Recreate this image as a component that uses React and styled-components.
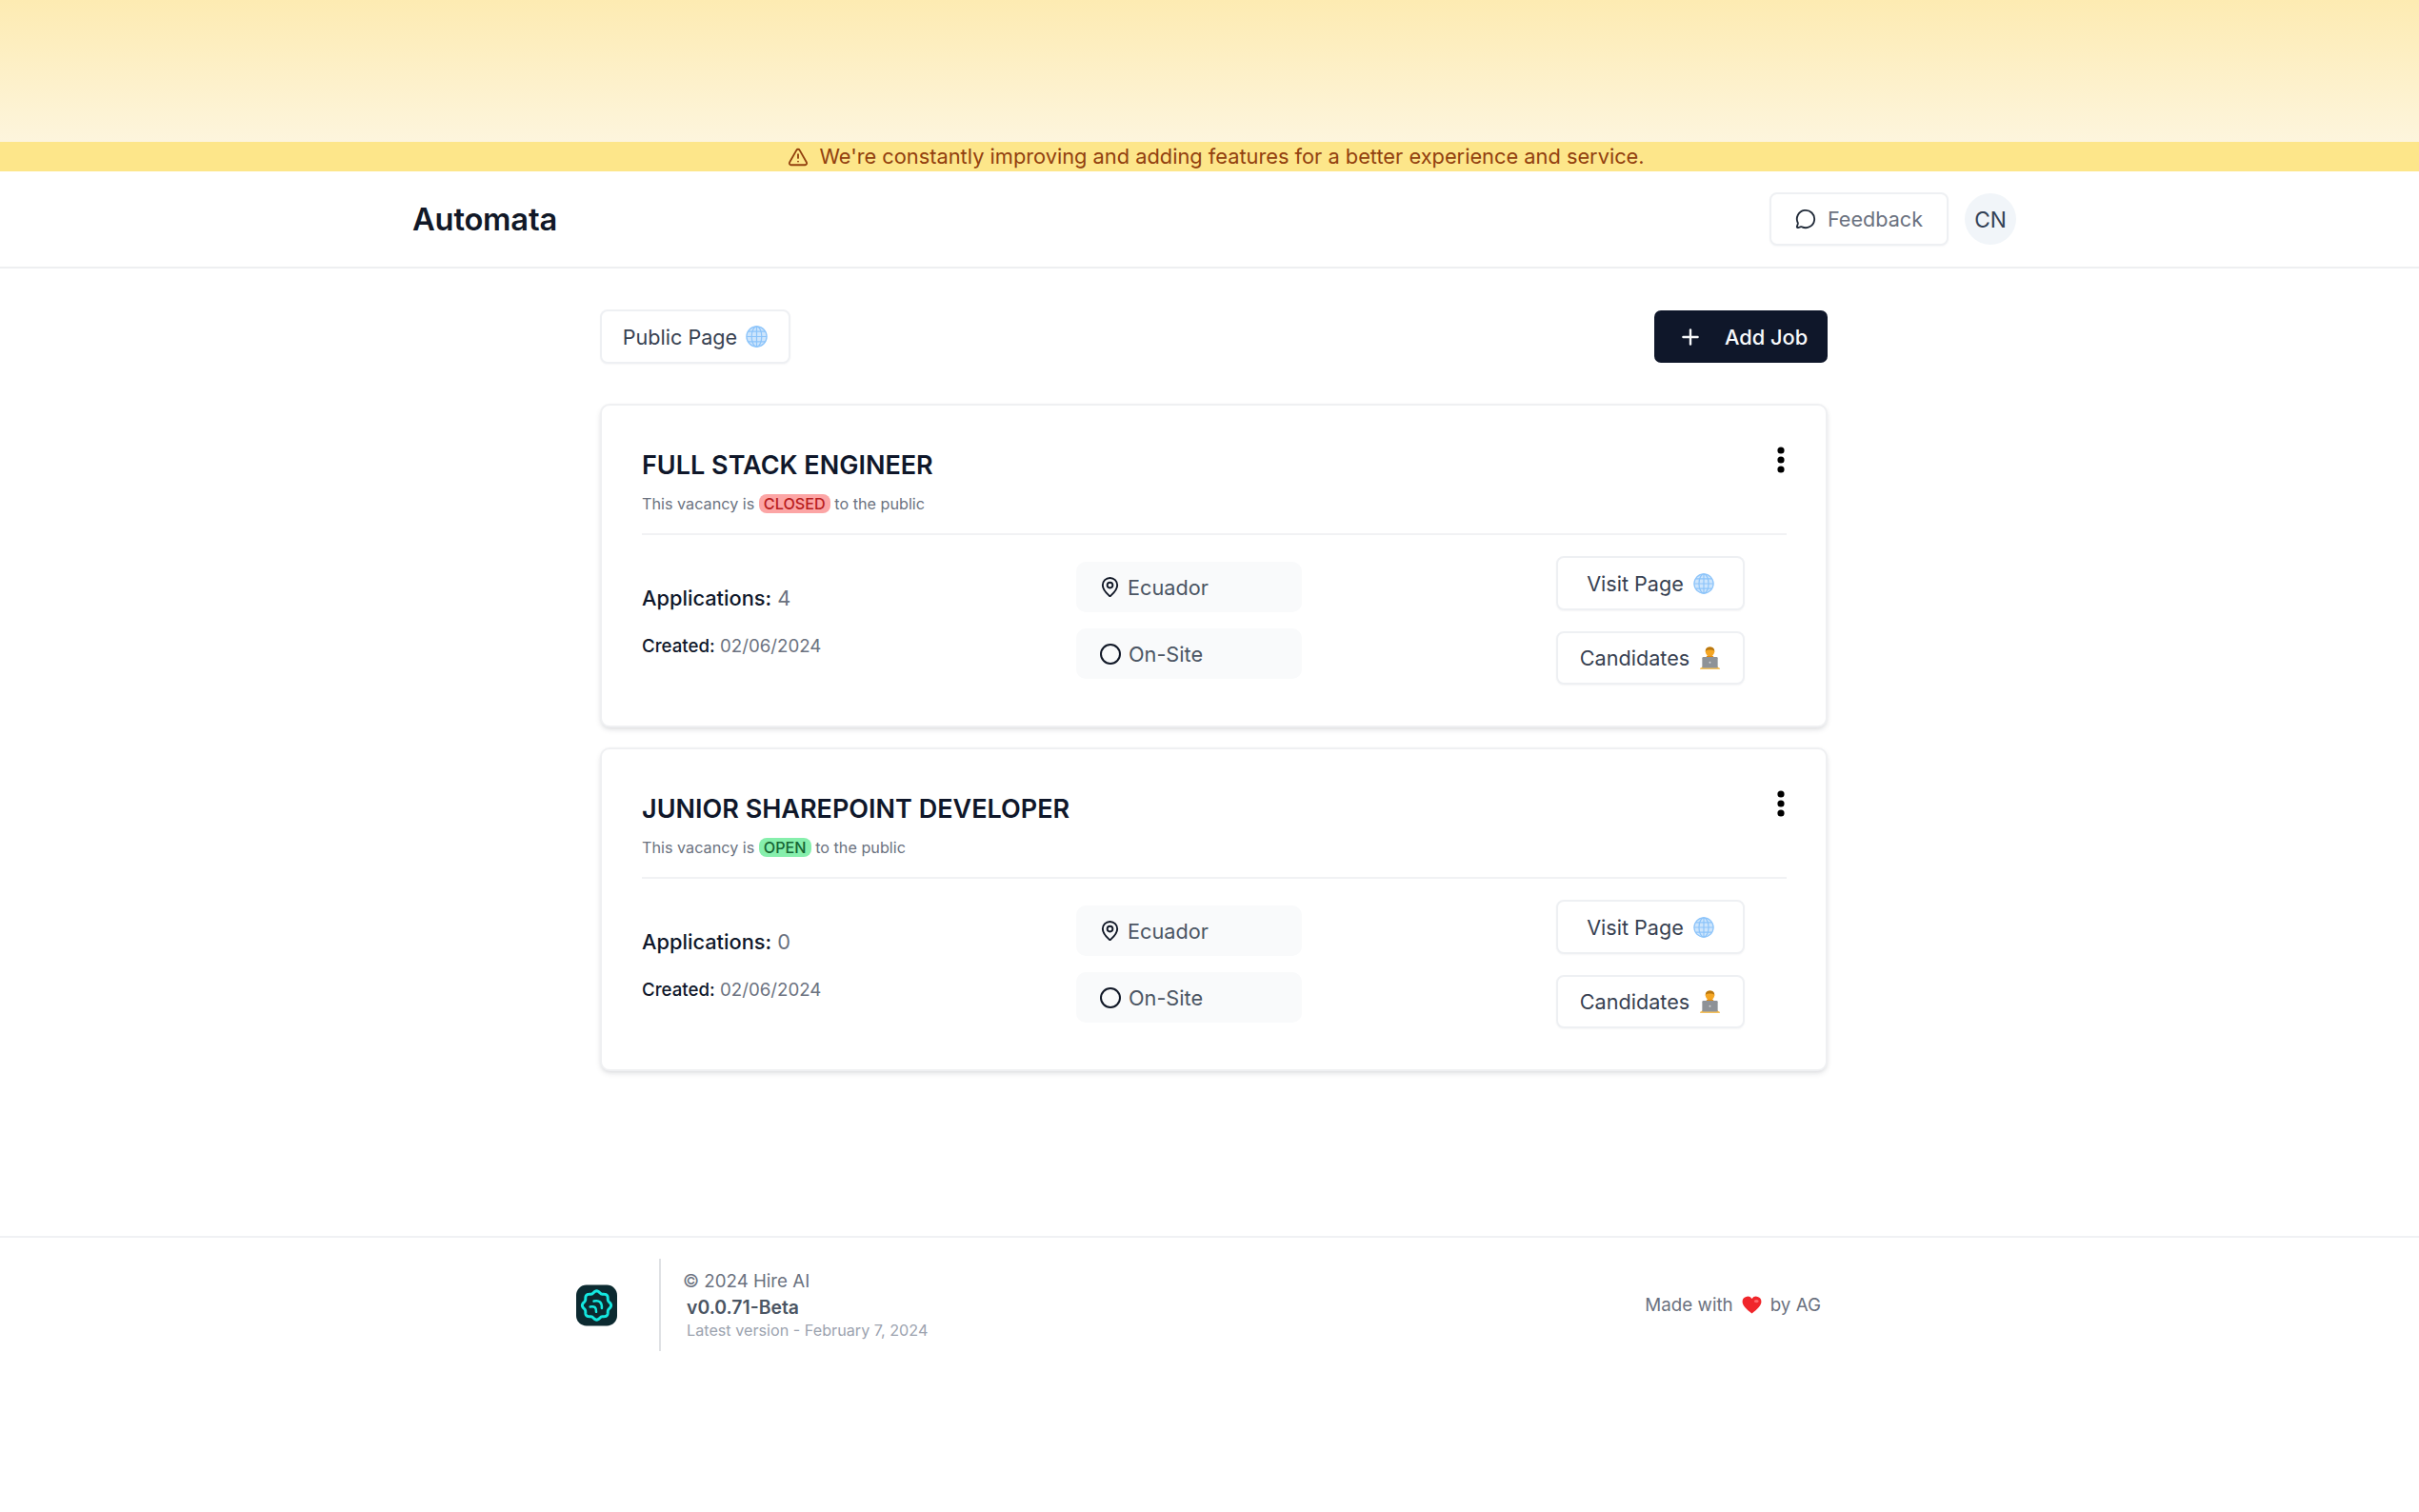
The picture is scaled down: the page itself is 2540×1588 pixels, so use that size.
import React from 'react';
import styled, { createGlobalStyle } from 'styled-components';
import { TriangleAlert, MessageCircle, Plus, MapPin, Circle } from 'lucide-react';

const Global = createGlobalStyle`
  html, body { margin: 0; padding: 0; background: #fff; }
  body { font-family: Inter, "Noto Sans", sans-serif; color: #0f172a; }
  * { box-sizing: border-box; }
`;

const Page = styled.div`
  width: 2540px;
  min-height: 1588px;
  display: flex;
  flex-direction: column;
`;

const TopGlow = styled.div`
  height: 149px;
  background: linear-gradient(180deg, #fdebb2 0%, #fdf5dd 100%);
`;

const Banner = styled.div`
  height: 31px;
  background: #fde68a;
  color: #92400e;
  display: flex;
  align-items: center;
  justify-content: center;
  gap: 11px;
  padding-left: 14px;
  font-size: 21.8px;
  line-height: 31px;
`;

const Header = styled.header`
  height: 102px;
  border-bottom: 2px solid #eeeff1;
  margin-bottom: -1px;
  display: flex;
  align-items: center;
  justify-content: space-between;
  padding: 0 423px 0 433px;
`;

const Brand = styled.div`
  font-size: 32.7px;
  font-weight: 600;
  letter-spacing: -0.2px;
  color: #111827;
`;

const HeaderActions = styled.div`
  display: flex;
  align-items: center;
  gap: 17px;
`;

const OutlineButton = styled.button`
  font-family: inherit;
  font-size: 21.6px;
  font-weight: 400;
  color: ${p => p.$muted ? '#6b7280' : '#374151'};
  background: #fff;
  border: 2px solid #eef0f3;
  border-radius: 8px;
  box-shadow: 0 1px 2px rgba(15, 23, 42, 0.04);
  display: flex;
  align-items: center;
  justify-content: center;
  gap: ${p => p.$gap || 10}px;
  width: ${p => p.$w}px;
  height: ${p => p.$h}px;
  padding: 0;
`;

const Avatar = styled.div`
  width: 54px;
  height: 54px;
  border-radius: 50%;
  background: #f1f5f9;
  color: #334155;
  font-size: 22.7px;
  display: flex;
  align-items: center;
  justify-content: center;
`;

const Main = styled.main`
  padding: 44px 621px 173px 630px;
  display: flex;
  flex-direction: column;
`;

const Toolbar = styled.div`
  display: flex;
  justify-content: space-between;
  align-items: center;
  height: 57px;
  margin-bottom: 42px;
`;

const PrimaryButton = styled.button`
  font-family: inherit;
  font-size: 21.8px;
  font-weight: 500;
  color: #f8fafc;
  background: #0f172a;
  border: 0;
  border-radius: 7px;
  width: 182px;
  height: 55px;
  display: flex;
  align-items: center;
  gap: 23px;
  padding: 0 0 0 25px;
`;

const CardList = styled.div`
  display: flex;
  flex-direction: column;
  gap: 21px;
`;

const Card = styled.article`
  position: relative;
  height: 340px;
  background: #fff;
  border: 2px solid #eff0f2;
  border-radius: 10px;
  box-shadow: 0 3px 6px -1px rgba(15, 23, 42, 0.12), 0 2px 4px -2px rgba(15, 23, 42, 0.08);
  padding: 0 41px 0 42px;
`;

const CardHead = styled.div`
  padding: 45px 0 19px;
  border-bottom: 2px solid #f1f2f4;
`;

const Title = styled.h2`
  margin: 0;
  font-size: 27px;
  line-height: 36px;
  font-weight: 600;
  color: #0f172a;
`;

const Sub = styled.div`
  margin-top: 10px;
  font-size: 16.2px;
  line-height: 24px;
  color: #6b7280;
`;

const Badge = styled.span`
  display: inline-block;
  line-height: 20px;
  padding: 0 5px;
  border-radius: 8px;
  font-weight: 500;
  background: ${p => p.$open ? '#86efac' : '#fca5a5'};
  color: ${p => p.$open ? '#166534' : '#b91c1c'};
`;

const Kebab = styled.svg`
  position: absolute;
  top: 43px;
  right: 42px;
  width: 10px;
  height: 28px;
`;

const CardBody = styled.div`
  display: flex;
`;

const StatsCol = styled.div`
  width: 456px;
  padding-top: 50px;
`;

const Stat = styled.div`
  font-size: ${p => p.$small ? 18.7 : 21.8}px;
  line-height: ${p => p.$small ? 28 : 32}px;
  margin-bottom: 21px;
  color: #6b7280;
  strong { font-weight: 500; color: #0f172a; }
`;

const TagsCol = styled.div`
  width: 237px;
  padding-top: 28px;
  display: flex;
  flex-direction: column;
  gap: 17px;
`;

const Tag = styled.div`
  height: 53px;
  border-radius: 10px;
  background: #f9fafb;
  display: flex;
  align-items: center;
  gap: 7px;
  padding-left: 24px;
  font-size: 21.7px;
  color: #4b5563;
  svg { color: #111827; }
`;

const ActionsCol = styled.div`
  margin-left: 267px;
  padding-top: 22px;
  display: flex;
  flex-direction: column;
  gap: 22px;
`;

const Footer = styled.footer`
  border-top: 2px solid #f0f1f4;
  padding: 22px 628px 0 605px;
  display: flex;
  align-items: flex-start;
  justify-content: space-between;
`;

const FooterLeft = styled.div`
  display: flex;
  align-items: center;
`;

const Divider = styled.div`
  width: 2px;
  height: 97px;
  margin: 0 23px 0 44px;
  background: #dfe1e4;
`;

const FooterInfo = styled.div`
  display: flex;
  flex-direction: column;
`;

const Copy = styled.div`
  font-size: 18.7px;
  line-height: 26px;
  color: #6b7280;
`;

const Version = styled.div`
  font-size: 19.4px;
  line-height: 26px;
  font-weight: 600;
  color: #4b5563;
  margin: 1px 0 0 4px;
`;

const Latest = styled.div`
  font-size: 16.2px;
  line-height: 22px;
  color: #9ca3af;
  margin-left: 4px;
`;

const Made = styled.div`
  height: 97px;
  display: flex;
  align-items: center;
  gap: 9px;
  font-size: 18.8px;
  color: #6b7280;
`;

const Globe = ({ size = 23 }) => (
  <svg width={size} height={size} viewBox="0 0 24 24" fill="none">
    <circle cx="12" cy="12" r="11.5" fill="#cde5fc" />
    <g stroke="#8cc4fa" strokeWidth="1.300">
      <circle cx="12" cy="12" r="11" />
      <ellipse cx="12" cy="12" rx="5.5" ry="11" />
      <path d="M12 1v22M1 12h22M2.600 6.500h18.800M2.600 17.500h18.800" />
    </g>
  </svg>
);

const Technologist = () => (
  <svg width="23" height="26" viewBox="0 0 24 26">
    <path d="M2 25c.5-2 2-3 4-3h12c2 0 3.500 1 4 3z" fill="#f5a623" />
    <path d="M8 12c0-1.500 2-2.500 4-2.500s4 1 4 2.500v3H8z" fill="#e08a10" />
    <circle cx="12" cy="6" r="5" fill="#f5a623" />
    <path d="M7 5.500C7 2.500 9 1 12 1s5 1.500 5 4.500c-1.500-1-3-1.500-5-1.500s-3.500.5-5 1.500z" fill="#b9770e" />
    <rect x="3.500" y="12" width="17" height="12.500" rx="1.200" fill="#8e9297" />
    <circle cx="12" cy="18" r="1" fill="#d4d6d9" />
    <rect x="1" y="24" width="22" height="1.500" rx=".7" fill="#f5c15d" />
  </svg>
);

const Heart = () => (
  <svg width="21" height="19" viewBox="0 0 24 22">
    <path d="M12 21.500C5 16 .5 12 .5 7A6.300 6.300 0 0 1 12 3.500 6.300 6.300 0 0 1 23.500 7c0 5-4.500 9-11.500 14.500z" fill="#f0262b" />
    <ellipse cx="17.500" cy="6.500" rx="2.800" ry="2" fill="#ff6a6d" />
  </svg>
);

const scallop = (() => {
  const pts = [];
  for (let i = 0; i < 120; i++) {
    const t = (i / 120) * Math.PI * 2;
    const r = 14.4 + 1.1 * Math.cos(8 * t);
    pts.push(`${(22 + r * Math.cos(t)).toFixed(2)},${(22 + r * Math.sin(t)).toFixed(2)}`);
  }
  return `M${pts.join('L')}Z`;
})();

const Logo = () => (
  <svg width="43" height="44" viewBox="0 0 44 44" fill="none">
    <rect width="44" height="44" rx="11" fill="#0c2a30" />
    <path d={scallop} stroke="#14e8e0" strokeWidth="3" />
    <path d="M19 17.500Q28 15.500 27.500 25M15 23.500Q22 22 21.500 29" stroke="#14e8e0" strokeWidth="2.600" strokeLinecap="round" />
  </svg>
);

const jobs = [
  { title: 'FULL STACK ENGINEER', open: false, apps: 4 },
  { title: 'JUNIOR SHAREPOINT DEVELOPER', open: true, apps: 0 },
];

export default function App() {
  return (
    <Page>
      <Global />
      <TopGlow />
      <Banner>
        <TriangleAlert size={22} strokeWidth={2} />
        <span>We're constantly improving and adding features for a better experience and service.</span>
      </Banner>
      <Header>
        <Brand>Automata</Brand>
        <HeaderActions>
          <OutlineButton $muted $w={188} $h={56} $gap={12}>
            <MessageCircle size={22} strokeWidth={2} color="#1f2937" />
            Feedback
          </OutlineButton>
          <Avatar>CN</Avatar>
        </HeaderActions>
      </Header>
      <Main>
        <Toolbar>
          <OutlineButton $w={200} $h={57} $gap={9}>
            Public Page
            <Globe />
          </OutlineButton>
          <PrimaryButton>
            <Plus size={26} strokeWidth={2.200} />
            Add Job
          </PrimaryButton>
        </Toolbar>
        <CardList>
          {jobs.map(job => (
            <Card key={job.title}>
              <CardHead>
                <Title>{job.title}</Title>
                <Sub>
                  This vacancy is <Badge $open={job.open}>{job.open ? 'OPEN' : 'CLOSED'}</Badge> to the public
                </Sub>
              </CardHead>
              <Kebab viewBox="0 0 10 28">
                <circle cx="5" cy="4" r="3.600" fill="#000" />
                <circle cx="5" cy="14" r="3.600" fill="#000" />
                <circle cx="5" cy="24" r="3.600" fill="#000" />
              </Kebab>
              <CardBody>
                <StatsCol>
                  <Stat><strong>Applications:</strong> {job.apps}</Stat>
                  <Stat $small><strong>Created:</strong> 02/06/2024</Stat>
                </StatsCol>
                <TagsCol>
                  <Tag><MapPin size={23} strokeWidth={2} />Ecuador</Tag>
                  <Tag><Circle size={24} strokeWidth={2} />On-Site</Tag>
                </TagsCol>
                <ActionsCol>
                  <OutlineButton $w={198} $h={57}>
                    Visit Page
                    <Globe size={22} />
                  </OutlineButton>
                  <OutlineButton $w={198} $h={56}>
                    Candidates
                    <Technologist />
                  </OutlineButton>
                </ActionsCol>
              </CardBody>
            </Card>
          ))}
        </CardList>
      </Main>
      <Footer>
        <FooterLeft>
          <Logo />
          <Divider />
          <FooterInfo>
            <Copy>© 2024 Hire AI</Copy>
            <Version>v0.0.71-Beta</Version>
            <Latest>Latest version - February 7, 2024</Latest>
          </FooterInfo>
        </FooterLeft>
        <Made>
          Made with <Heart /> by AG
        </Made>
      </Footer>
    </Page>
  );
}
